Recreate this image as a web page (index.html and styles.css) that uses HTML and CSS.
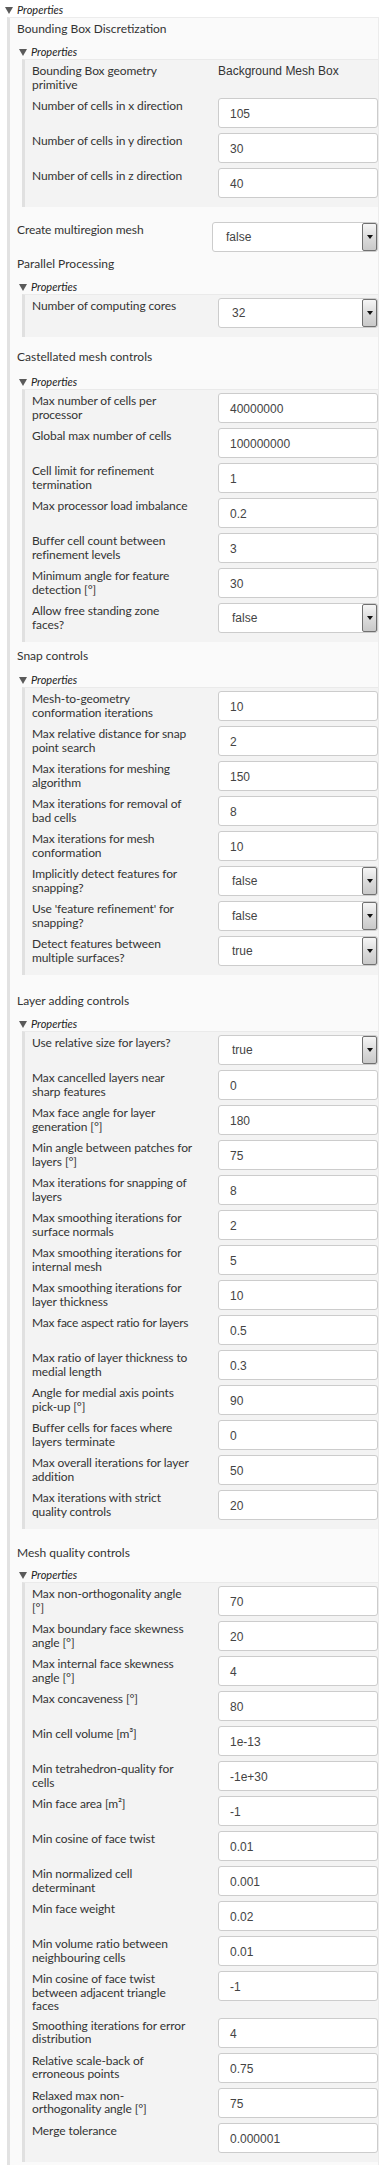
FILE: index.html
```html
<!DOCTYPE html>
<html>
<head>
<meta charset="utf-8">
<link rel="stylesheet" href="styles.css">
</head>
<body>
<div class="toggle toggle-top"><span class="tri"></span><span class="toggle-text">Properties</span></div>
<div class="panel">
  <div class="heading h-first">Bounding Box Discretization</div>
  <div class="toggle"><span class="tri"></span><span class="toggle-text">Properties</span></div>
  <div class="inner">
    <div class="row row-static"><div class="label">Bounding Box geometry primitive</div><div class="value static">Background Mesh Box</div></div>
    <div class="row"><div class="label">Number of cells in x direction</div><div class="value"><div class="input">105</div></div></div>
    <div class="row"><div class="label">Number of cells in y direction</div><div class="value"><div class="input">30</div></div></div>
    <div class="row"><div class="label">Number of cells in z direction</div><div class="value"><div class="input">40</div></div></div>
  </div>

  <div class="row outer-row"><div class="label olabel">Create multiregion mesh</div><div class="value ovalue"><div class="select"><span class="select-text">false</span><span class="select-btn"><span class="arrow"></span></span></div></div></div>

  <div class="heading h-parallel">Parallel Processing</div>
  <div class="toggle"><span class="tri"></span><span class="toggle-text">Properties</span></div>
  <div class="inner">
    <div class="row"><div class="label">Number of computing cores</div><div class="value"><div class="select"><span class="select-text">32</span><span class="select-btn"><span class="arrow"></span></span></div></div></div>
  </div>

  <div class="heading h-cast">Castellated mesh controls</div>
  <div class="toggle t-cast"><span class="tri"></span><span class="toggle-text">Properties</span></div>
  <div class="inner">
    <div class="row"><div class="label">Max number of cells per processor</div><div class="value"><div class="input">40000000</div></div></div>
    <div class="row"><div class="label">Global max number of cells</div><div class="value"><div class="input">100000000</div></div></div>
    <div class="row"><div class="label">Cell limit for refinement termination</div><div class="value"><div class="input">1</div></div></div>
    <div class="row"><div class="label">Max processor load imbalance</div><div class="value"><div class="input">0.2</div></div></div>
    <div class="row"><div class="label">Buffer cell count between refinement levels</div><div class="value"><div class="input">3</div></div></div>
    <div class="row"><div class="label">Minimum angle for feature detection [°]</div><div class="value"><div class="input">30</div></div></div>
    <div class="row"><div class="label">Allow free standing zone faces?</div><div class="value"><div class="select"><span class="select-text">false</span><span class="select-btn"><span class="arrow"></span></span></div></div></div>
  </div>

  <div class="heading h-snap">Snap controls</div>
  <div class="toggle t-snap"><span class="tri"></span><span class="toggle-text">Properties</span></div>
  <div class="inner">
    <div class="row"><div class="label">Mesh-to-geometry conformation iterations</div><div class="value"><div class="input">10</div></div></div>
    <div class="row"><div class="label">Max relative distance for snap point search</div><div class="value"><div class="input">2</div></div></div>
    <div class="row"><div class="label">Max iterations for meshing algorithm</div><div class="value"><div class="input">150</div></div></div>
    <div class="row"><div class="label">Max iterations for removal of bad cells</div><div class="value"><div class="input">8</div></div></div>
    <div class="row"><div class="label">Max iterations for mesh conformation</div><div class="value"><div class="input">10</div></div></div>
    <div class="row"><div class="label">Implicitly detect features for snapping?</div><div class="value"><div class="select"><span class="select-text">false</span><span class="select-btn"><span class="arrow"></span></span></div></div></div>
    <div class="row"><div class="label">Use 'feature refinement' for snapping?</div><div class="value"><div class="select"><span class="select-text">false</span><span class="select-btn"><span class="arrow"></span></span></div></div></div>
    <div class="row"><div class="label">Detect features between multiple surfaces?</div><div class="value"><div class="select"><span class="select-text">true</span><span class="select-btn"><span class="arrow"></span></span></div></div></div>
  </div>

  <div class="heading h-layer">Layer adding controls</div>
  <div class="toggle"><span class="tri"></span><span class="toggle-text">Properties</span></div>
  <div class="inner">
    <div class="row"><div class="label">Use relative size for layers?</div><div class="value"><div class="select"><span class="select-text">true</span><span class="select-btn"><span class="arrow"></span></span></div></div></div>
    <div class="row"><div class="label">Max cancelled layers near sharp features</div><div class="value"><div class="input">0</div></div></div>
    <div class="row"><div class="label">Max face angle for layer generation [°]</div><div class="value"><div class="input">180</div></div></div>
    <div class="row"><div class="label">Min angle between patches for layers [°]</div><div class="value"><div class="input">75</div></div></div>
    <div class="row"><div class="label">Max iterations for snapping of layers</div><div class="value"><div class="input">8</div></div></div>
    <div class="row"><div class="label">Max smoothing iterations for surface normals</div><div class="value"><div class="input">2</div></div></div>
    <div class="row"><div class="label">Max smoothing iterations for internal mesh</div><div class="value"><div class="input">5</div></div></div>
    <div class="row"><div class="label">Max smoothing iterations for layer thickness</div><div class="value"><div class="input">10</div></div></div>
    <div class="row"><div class="label label-tight">Max face aspect ratio for layers</div><div class="value"><div class="input">0.5</div></div></div>
    <div class="row"><div class="label">Max ratio of layer thickness to medial length</div><div class="value"><div class="input">0.3</div></div></div>
    <div class="row"><div class="label">Angle for medial axis points pick-up [°]</div><div class="value"><div class="input">90</div></div></div>
    <div class="row"><div class="label">Buffer cells for faces where layers terminate</div><div class="value"><div class="input">0</div></div></div>
    <div class="row"><div class="label">Max overall iterations for layer addition</div><div class="value"><div class="input">50</div></div></div>
    <div class="row"><div class="label">Max iterations with strict quality controls</div><div class="value"><div class="input">20</div></div></div>
  </div>

  <div class="heading h-quality">Mesh quality controls</div>
  <div class="toggle t-quality"><span class="tri"></span><span class="toggle-text">Properties</span></div>
  <div class="inner">
    <div class="row"><div class="label">Max non-orthogonality angle [°]</div><div class="value"><div class="input">70</div></div></div>
    <div class="row"><div class="label">Max boundary face skewness angle [°]</div><div class="value"><div class="input">20</div></div></div>
    <div class="row"><div class="label">Max internal face skewness angle [°]</div><div class="value"><div class="input">4</div></div></div>
    <div class="row"><div class="label">Max concaveness [°]</div><div class="value"><div class="input">80</div></div></div>
    <div class="row"><div class="label">Min cell volume [m³]</div><div class="value"><div class="input">1e-13</div></div></div>
    <div class="row"><div class="label">Min tetrahedron-quality for cells</div><div class="value"><div class="input">-1e+30</div></div></div>
    <div class="row"><div class="label">Min face area [m²]</div><div class="value"><div class="input">-1</div></div></div>
    <div class="row"><div class="label">Min cosine of face twist</div><div class="value"><div class="input">0.01</div></div></div>
    <div class="row"><div class="label">Min normalized cell determinant</div><div class="value"><div class="input">0.001</div></div></div>
    <div class="row"><div class="label">Min face weight</div><div class="value"><div class="input">0.02</div></div></div>
    <div class="row"><div class="label">Min volume ratio between neighbouring cells</div><div class="value"><div class="input">0.01</div></div></div>
    <div class="row"><div class="label">Min cosine of face twist between adjacent triangle faces</div><div class="value"><div class="input">-1</div></div></div>
    <div class="row"><div class="label">Smoothing iterations for error distribution</div><div class="value"><div class="input">4</div></div></div>
    <div class="row"><div class="label">Relative scale-back of erroneous points</div><div class="value"><div class="input">0.75</div></div></div>
    <div class="row"><div class="label">Relaxed max non-orthogonality angle [°]</div><div class="value"><div class="input">75</div></div></div>
    <div class="row"><div class="label">Merge tolerance</div><div class="value"><div class="input">0.000001</div></div></div>
  </div>
</div>
</body>
</html>
```
FILE: styles.css
```css
* { box-sizing: border-box; }
html, body { margin: 0; padding: 0; background: #ffffff; }
body {
  font-family: Lato, "Open Sans", sans-serif;
  font-size: 12px;
  color: #333333;
  width: 390px;
}

.toggle {
  display: flex;
  align-items: center;
  height: 14px;
  margin-top: 9px;
  margin-left: 2px;
}
.toggle-top {
  margin: 3px 0 0 5px;
}
.t-cast { margin-top: 11px; }
.t-snap { margin-top: 10px; }
.t-quality { margin-top: 8px; }

.tri {
  width: 0;
  height: 0;
  border-left: 4px solid transparent;
  border-right: 4px solid transparent;
  border-top: 7px solid #5a5a5a;
  margin-right: 4px;
}
.toggle-text {
  font-style: italic;
  font-size: 11px;
  color: #222;
  line-height: 14px;
}

.panel {
  margin-left: 7px;
  width: 372px;
  border-left: 3px solid #e2e2e2;
  border-top: 1px solid #ececec;
  border-right: 1px solid #ececec;
  background: #fafafa;
  padding: 0 0 3px 7px;
}

.heading {
  line-height: 14px;
  font-size: 12px;
  color: #333;
}
.h-first { margin-top: 4px; }
.h-parallel { margin-top: 1px; }
.h-cast { margin-top: 13px; }
.h-snap { margin-top: 7px; }
.h-layer { margin-top: 19px; }
.h-quality { margin-top: 17px; }

.inner {
  margin-left: 5px;
  background: #f3f3f3;
  border-left: 3px solid #e0e0e0;
  border-top: 1px solid #eaeaea;
  padding: 3px 0 4px 7px;
}

.row {
  display: flex;
  align-items: flex-start;
  margin-bottom: 5px;
}
.row-static { margin-bottom: 7px; }
.label {
  flex: 0 0 160px;
  line-height: 13.5px;
  padding-top: 1px;
  color: #333;
  letter-spacing: -0.1px;
}
.label-tight { letter-spacing: -0.25px; }
.value {
  flex: 1;
  margin-left: 26px;
}
.outer-row { margin-top: 15px; }
.olabel { flex: 0 0 170px; }
.ovalue { margin-left: 25px; }

.static {
  font-family: "Liberation Sans", Arial, sans-serif;
  font-size: 12px;
  line-height: 14px;
  color: #333;
  padding-top: 1px;
}

.input {
  height: 30px;
  background: #ffffff;
  border: 1px solid #cccccc;
  border-radius: 3px;
  padding: 0 0 0 11px;
  font-family: "Liberation Sans", Arial, sans-serif;
  font-size: 12px;
  line-height: 30px;
  color: #444;
}

.select {
  display: flex;
  height: 30px;
  background: #ffffff;
  border: 1px solid #cccccc;
  border-radius: 3px;
  font-family: "Liberation Sans", Arial, sans-serif;
  font-size: 12px;
  color: #444;
}
.select-text {
  flex: 1;
  padding-left: 13px;
  line-height: 28px;
}
.select-btn {
  flex: 0 0 15px;
  border: 1px solid #707070;
  border-radius: 2px;
  background: linear-gradient(#f6f6f6, #dcdcdc 50%, #c9c9c9);
  display: flex;
  align-items: center;
  justify-content: center;
}
.arrow {
  width: 0;
  height: 0;
  border-left: 3.5px solid transparent;
  border-right: 3.5px solid transparent;
  border-top: 4px solid #111;
}
```
